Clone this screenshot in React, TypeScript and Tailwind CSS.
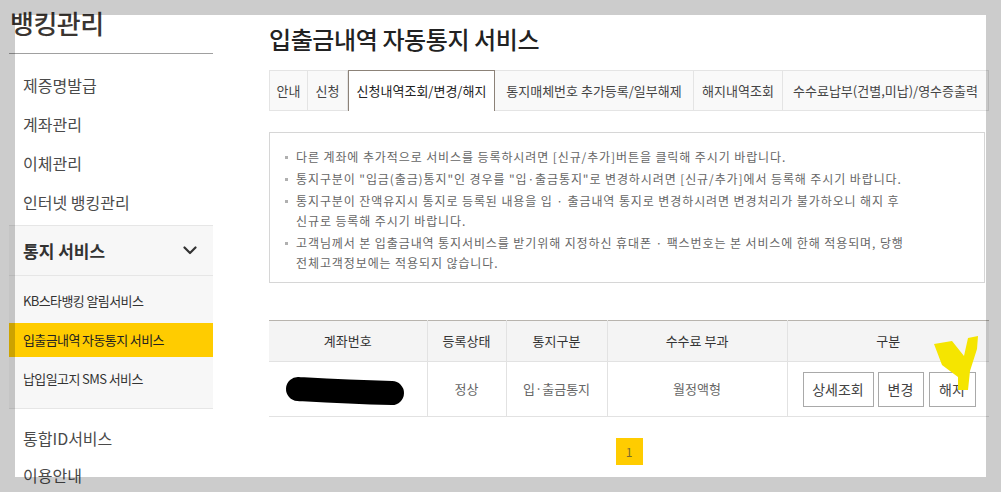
import React from "react";

const subItems = [
  { label: "KB스타뱅킹 알림서비스", active: false },
  { label: "입출금내역 자동통지 서비스", active: true },
  { label: "납입일고지 SMS 서비스", active: false },
];

const tabs = [
  { label: "안내", w: "w-[39px]", active: false },
  { label: "신청", w: "w-[40px]", active: false },
  { label: "신청내역조회/변경/해지", w: "w-[147px]", active: true },
  { label: "통지매체번호 추가등록/일부해제", w: "w-[199px]", active: false },
  { label: "해지내역조회", w: "w-[89px]", active: false },
  { label: "수수료납부(건별,미납)/영수증출력", w: "flex-1", active: false },
];

function Chevron() {
  return (
    <svg width="14" height="9" viewBox="0 0 14 9" fill="none">
      <path d="M1.5 1.5 L7 7 L12.5 1.5" stroke="#333" strokeWidth="2.2" strokeLinecap="round" strokeLinejoin="round" />
    </svg>
  );
}

const notices = [
  ["다른 계좌에 추가적으로 서비스를 등록하시려면 [신규/추가]버튼을 클릭해 주시기 바랍니다."],
  ["통지구분이 \"입금(출금)통지\"인 경우를 \"입·출금통지\"로 변경하시려면 [신규/추가]에서 등록해 주시기 바랍니다."],
  ["통지구분이 잔액유지시 통지로 등록된 내용을 입 · 출금내역 통지로 변경하시려면 변경처리가 불가하오니 해지 후", "신규로 등록해 주시기 바랍니다."],
  ["고객님께서 본 입출금내역 통지서비스를 받기위해 지정하신 휴대폰 · 팩스번호는 본 서비스에 한해 적용되며, 당행", "전체고객정보에는 적용되지 않습니다."],
];

export default function App() {
  return (
    <div className="relative w-[1001px] h-[492px] overflow-hidden bg-white font-['Noto_Sans_CJK_KR',sans-serif] text-[#333]">
      <div className="flex pl-[9px] pt-[5px]">
        {/* Sidebar */}
        <aside className="w-[204px] shrink-0">
          <div className="pt-[3px] pb-[15px] border-b border-[#a0a0a0] text-[26px] leading-[30px] font-medium text-[#3a3531] pl-[1px] tracking-[-0.5px]">
            뱅킹관리
          </div>
          <ul className="pt-[11px] text-[16px] text-[#4a4a4a]">
            {["제증명발급", "계좌관리", "이체관리", "인터넷 뱅킹관리"].map((t) => (
              <li key={t} className="h-[39px] flex items-center pl-[14px]">
                {t}
              </li>
            ))}
          </ul>
          <div className="mt-[4px] bg-[#f7f7f7] border-t border-b border-[#e6e6e6]">
            <div className="h-[50px] flex items-center justify-between pl-[14px] pr-[16px] border-b border-[#e6e6e6]">
              <span className="text-[17px] font-bold text-[#333]">통지 서비스</span>
              <Chevron />
            </div>
            <ul className="pt-[8px] pb-[12px] flex flex-col gap-[5px] text-[13px] tracking-[-0.6px] text-[#333]">
              {subItems.map((s) => (
                <li
                  key={s.label}
                  className={`h-[34px] flex items-center pl-[14px] ${s.active ? "bg-[#ffcc00] text-[#222]" : ""}`}
                >
                  {s.label}
                </li>
              ))}
            </ul>
          </div>
          <ul className="pt-[10px] text-[16px] text-[#4a4a4a]">
            {["통합ID서비스", "이용안내"].map((t) => (
              <li key={t} className="h-[37px] flex items-center pl-[14px]">
                {t}
              </li>
            ))}
          </ul>
        </aside>

        {/* Main */}
        <main className="ml-[56px] w-[720px] shrink-0 pt-[18px]">
          <h1 className="text-[24px] leading-[32px] font-medium text-[#222] tracking-[-0.4px]">
            입출금내역 자동통지 서비스
          </h1>

          <div className="mt-[15px] flex h-[41px] text-[13px] text-[#444]">
            {tabs.map((t) =>
              t.active ? (
                <div
                  key={t.label}
                  className={`${t.w} flex items-center justify-center bg-white border border-b-0 border-[#8c8278] text-[#222] whitespace-nowrap`}
                >
                  {t.label}
                </div>
              ) : (
                <div
                  key={t.label}
                  className={`${t.w} flex items-center justify-center bg-[#f9f9f9] border-t border-b border-r border-[#e4e4e4] first:border-l whitespace-nowrap`}
                >
                  {t.label}
                </div>
              )
            )}
          </div>

          <div className="mt-[21px] w-[716px] border border-[#d6d6d6] pt-[14px] pb-[9px] pl-[15px] text-[12px] leading-[20px] tracking-[0.9px] text-[#666] whitespace-nowrap">
            <ul className="flex flex-col gap-[2px]">
              {notices.map((lines, i) => (
                <li key={i} className="flex">
                  <span className="w-[11px] shrink-0 flex pt-[9px]">
                    <span className="block w-[3px] h-[3px] bg-[#b0b0b0]" />
                  </span>
                  <span>
                    {lines.map((l, j) => (
                      <span key={j} className="block">
                        {l}
                      </span>
                    ))}
                  </span>
                </li>
              ))}
            </ul>
          </div>

          <table className="mt-[37px] w-full border-collapse text-[13px] table-fixed">
            <colgroup>
              <col className="w-[158px]" />
              <col className="w-[79px]" />
              <col className="w-[101px]" />
              <col className="w-[180px]" />
              <col />
            </colgroup>
            <thead>
              <tr className="h-[41px] bg-[#f4f4f4] border-t border-[#b8b4ae] text-[#333]">
                <th className="font-normal border-b border-[#e2e2e2]">계좌번호</th>
                <th className="font-normal border-b border-l border-[#e2e2e2]">등록상태</th>
                <th className="font-normal border-b border-l border-[#e2e2e2]">통지구분</th>
                <th className="font-normal border-b border-l border-[#e2e2e2]">수수료 부과</th>
                <th className="font-normal border-b border-l border-[#e2e2e2]">구분</th>
              </tr>
            </thead>
            <tbody>
              <tr className="h-[55px] text-[#666] border-b border-[#e2e2e2]">
                <td className="text-center">
                  <div className="flex justify-center pr-[6px] pt-[3px]">
                    <svg width="120" height="30" viewBox="0 0 120 30">
                      <path
                        d="M13 13 C 30 14, 60 16, 107 17"
                        stroke="#000"
                        strokeWidth="24"
                        strokeLinecap="round"
                        fill="none"
                      />
                    </svg>
                  </div>
                </td>
                <td className="text-center border-l border-[#e2e2e2]">정상</td>
                <td className="text-center border-l border-[#e2e2e2]">입·출금통지</td>
                <td className="text-center border-l border-[#e2e2e2]">월정액형</td>
                <td className="border-l border-[#e2e2e2] pl-[15px]">
                  <div className="flex gap-[4px] text-[14px] text-[#444]">
                    <button className="w-[71px] h-[35px] border border-[#a9a9a9] bg-white">상세조회</button>
                    <button className="w-[46px] h-[35px] border border-[#a9a9a9] bg-white">변경</button>
                    <button className="ml-[1px] w-[47px] h-[35px] border border-[#a9a9a9] bg-white">해지</button>
                  </div>
                </td>
              </tr>
            </tbody>
          </table>

          <div className="mt-[21px] flex justify-center">
            <span className="w-[27px] h-[27px] bg-[#ffcc00] flex items-center justify-center text-[12px] text-[#7a6a30]">
              1
            </span>
          </div>
        </main>
      </div>

      {/* yellow check mark drawn over the page */}
      <svg className="absolute left-[930px] top-[335px] pointer-events-none" width="50" height="58" viewBox="0 0 50 58">
        <polygon
          points="4,9 22,6 34,21 38,3 48,1 47,14 40,36 38,55 28,55 28,42 12,30"
          fill="#f5e500"
        />
      </svg>

      {/* dimming overlay frame */}
      <div className="absolute left-0 top-0 w-[1001px] h-[15px] bg-black/20 pointer-events-none" />
      <div className="absolute left-0 top-[15px] w-[15px] h-[462px] bg-black/20 pointer-events-none" />
      <div className="absolute left-[986px] top-[15px] w-[15px] h-[462px] bg-black/20 pointer-events-none" />
      <div className="absolute left-0 top-[477px] w-[1001px] h-[15px] bg-black/20 pointer-events-none" />
    </div>
  );
}
